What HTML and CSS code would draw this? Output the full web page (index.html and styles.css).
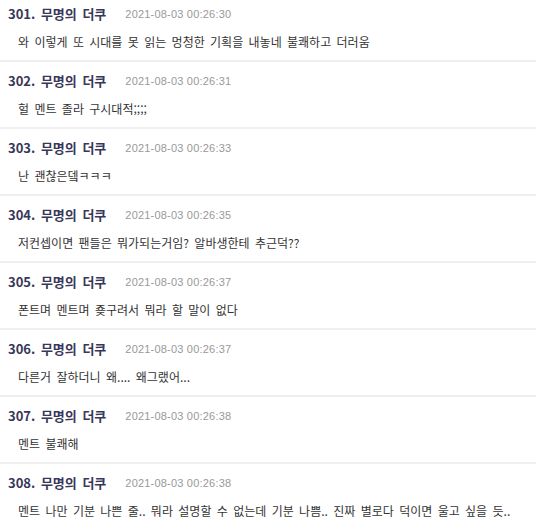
FILE: index.html
```html
<!DOCTYPE html>
<html lang="ko">
<head>
<meta charset="utf-8">
<link rel="stylesheet" href="styles.css">
</head>
<body>
<ul class="comments">
  <li class="comment">
    <div class="meta"><span class="name">301. 무명의 더쿠</span><span class="date">2021-08-03 00:26:30</span></div>
    <p class="text">와 이렇게 또 시대를 못 읽는 멍청한 기획을 내놓네 불쾌하고 더러움</p>
  </li>
  <li class="comment">
    <div class="meta"><span class="name">302. 무명의 더쿠</span><span class="date">2021-08-03 00:26:31</span></div>
    <p class="text">헐 멘트 졸라 구시대적;;;;</p>
  </li>
  <li class="comment">
    <div class="meta"><span class="name">303. 무명의 더쿠</span><span class="date">2021-08-03 00:26:33</span></div>
    <p class="text">난 괜찮은뎈ㅋㅋㅋ</p>
  </li>
  <li class="comment">
    <div class="meta"><span class="name">304. 무명의 더쿠</span><span class="date">2021-08-03 00:26:35</span></div>
    <p class="text">저컨셉이면 팬들은 뭐가되는거임? 알바생한테 추근덕??</p>
  </li>
  <li class="comment">
    <div class="meta"><span class="name">305. 무명의 더쿠</span><span class="date">2021-08-03 00:26:37</span></div>
    <p class="text">폰트며 멘트며 죶구려서 뭐라 할 말이 없다</p>
  </li>
  <li class="comment">
    <div class="meta"><span class="name">306. 무명의 더쿠</span><span class="date">2021-08-03 00:26:37</span></div>
    <p class="text">다른거 잘하더니 왜.... 왜그랬어...</p>
  </li>
  <li class="comment">
    <div class="meta"><span class="name">307. 무명의 더쿠</span><span class="date">2021-08-03 00:26:38</span></div>
    <p class="text">멘트 불쾌해</p>
  </li>
  <li class="comment">
    <div class="meta"><span class="name">308. 무명의 더쿠</span><span class="date">2021-08-03 00:26:38</span></div>
    <p class="text">멘트 나만 기분 나쁜 줄.. 뭐라 설명할 수 없는데 기분 나쁨.. 진짜 별로다 덕이면 울고 싶을 듯..</p>
  </li>
</ul>
</body>
</html>
```
FILE: styles.css
```css
html, body {
  margin: 0;
  padding: 0;
  background: #fff;
}
body {
  font-family: "Noto Sans CJK KR", "Liberation Sans", sans-serif;
  overflow: hidden;
}
.comments {
  list-style: none;
  margin: -5px 0 0 0;
  padding: 0;
}
.comment {
  padding: 12px 8px 9px 8px;
  border-bottom: 2px solid #efefef;
}
.meta {
  display: flex;
  align-items: center;
  height: 14px;
  line-height: 14px;
}
.name {
  font-size: 13px;
  font-weight: bold;
  word-spacing: 2px;
  color: #38375a;
}
.date {
  margin-left: 19px;
  font-family: "Liberation Sans", sans-serif;
  font-size: 11px;
  letter-spacing: 0.2px;
  color: #999;
}
.text {
  margin: 12px 0 0 10px;
  font-size: 12px;
  line-height: 18px;
  height: 18px;
  word-spacing: 2px;
  color: #333;
  white-space: nowrap;
}
```
